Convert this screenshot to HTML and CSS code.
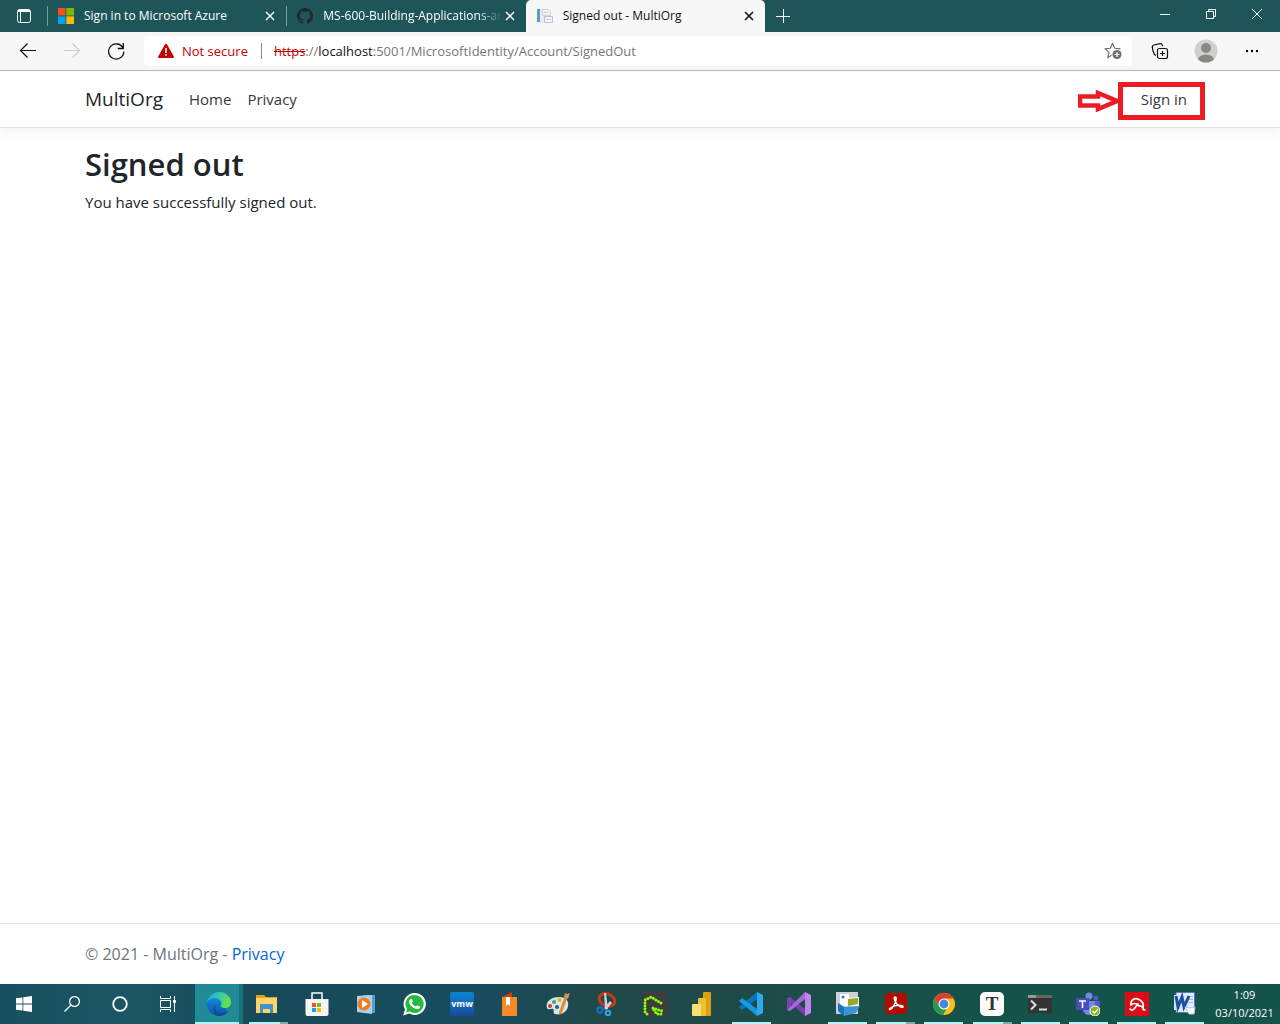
FILE: index.html
```html
<!DOCTYPE html>
<html lang="en">
<head>
<meta charset="utf-8">
<meta name="viewport" content="width=device-width, initial-scale=1">
<title>Signed out - MultiOrg</title>
<link rel="stylesheet" href="styles.css">
</head>
<body>
<div class="titlebar">
  <button class="tab-actions" aria-label="Tab actions menu">
    <svg width="16" height="16" viewBox="0 0 16 16" fill="none" stroke="#fff"><rect x="1.500" y="1.500" width="13" height="13" rx="2"/><path d="M2 3.500h12M2 2.500h12M4.500 4v10"/></svg>
  </button>
  <div class="tabs">
    <div class="tab">
      <button class="tab-main">
        <svg width="16" height="16" viewBox="0 0 16 16"><path fill="#f25022" d="M0 0h7.500v7.500H0z"/><path fill="#7fba00" d="M8.300 0H16v7.500H8.300z"/><path fill="#00a4ef" d="M0 8.300h7.500V16H0z"/><path fill="#ffb900" d="M8.300 8.300H16V16H8.300z"/></svg>
        <span class="tab-title">Sign in to Microsoft Azure</span>
      </button>
      <button class="tab-close" aria-label="Close tab"><svg width="10" height="10" viewBox="0 0 10 10" stroke="currentColor" stroke-width="1.300"><path d="M1 1l8 8M9 1L1 9"/></svg></button>
    </div>
    <div class="tab">
      <button class="tab-main">
        <svg width="16" height="16" viewBox="0 0 16 16" fill="#24292e"><path d="M8 0C3.580 0 0 3.580 0 8c0 3.540 2.290 6.530 5.470 7.590.4.070.55-.17.55-.38 0-.19-.01-.82-.01-1.490-2.010.37-2.530-.49-2.690-.94-.09-.23-.48-.94-.82-1.130-.28-.15-.68-.52-.01-.53.63-.01 1.080.58 1.230.82.72 1.210 1.870.87 2.330.66.07-.52.28-.87.51-1.070-1.780-.2-3.640-.89-3.640-3.950 0-.87.31-1.590.82-2.150-.08-.2-.36-1.020.08-2.120 0 0 .67-.21 2.200.82.64-.18 1.320-.27 2-.27s1.360.09 2 .27c1.530-1.040 2.200-.82 2.200-.82.44 1.100.16 1.920.08 2.120.51.56.82 1.270.82 2.150 0 3.070-1.870 3.750-3.650 3.950.29.25.54.73.54 1.480 0 1.070-.01 1.930-.01 2.200 0 .21.15.46.55.38A8.010 8.010 0 0 0 16 8c0-4.420-3.580-8-8-8z"/></svg>
        <span class="tab-title tab-title-fade">MS-600-Building-Applications-ar</span>
      </button>
      <button class="tab-close" aria-label="Close tab"><svg width="10" height="10" viewBox="0 0 10 10" stroke="currentColor" stroke-width="1.300"><path d="M1 1l8 8M9 1L1 9"/></svg></button>
    </div>
    <div class="tab tab-active">
      <button class="tab-main">
        <svg width="16" height="16" viewBox="0 0 16 16"><path fill="#e8edf3" d="M1 1h10v14H1z"/><path fill="#5b9bd0" d="M0 1h3v13H0z"/><path fill="#f1f3f7" stroke="#ccd2dc" d="M5.500 1.500h6l2 2v4h-8z"/><path fill="#f4f5f9" stroke="#bcc2d0" d="M7.500 8.500h8v6h-8z"/><path stroke="#c3cad6" d="M9 11.500h5M7 4.500h4"/></svg>
        <span class="tab-title">Signed out - MultiOrg</span>
      </button>
      <button class="tab-close" aria-label="Close tab"><svg width="10" height="10" viewBox="0 0 10 10" stroke="currentColor" stroke-width="1.600"><path d="M1 1l8 8M9 1L1 9"/></svg></button>
    </div>
  </div>
  <button class="new-tab" aria-label="New tab"><svg width="14" height="14" viewBox="0 0 14 14" stroke="#fff"><path d="M0 7.500h14M7.500 0v14"/></svg></button>
  <div class="window-controls">
    <button aria-label="Minimise"><svg width="10" height="10" viewBox="0 0 10 10" stroke="#fff"><path d="M0 5.500h10"/></svg></button>
    <button aria-label="Restore"><svg width="10" height="10" viewBox="0 0 10 10" fill="none" stroke="#fff"><path d="M.5 2.500h7v7h-7zM2.500 2V.5h7v7H8"/></svg></button>
    <button aria-label="Close window"><svg width="10" height="10" viewBox="0 0 10 10" stroke="#fff"><path d="M0 0l10 10M10 0L0 10"/></svg></button>
  </div>
</div>

<div class="toolbar">
  <div class="nav-buttons">
    <button aria-label="Back"><svg width="18" height="18" viewBox="0 0 18 18" fill="none" stroke="#111" stroke-width="1.200"><path d="M17 8.500H1.500M8.500 1.500l-7 7 7 7"/></svg></button>
    <button aria-label="Forward" disabled><svg width="18" height="18" viewBox="0 0 18 18" fill="none" stroke="#ccc" stroke-width="1.200"><path d="M1 8.500h15.500M9.500 1.500l7 7-7 7"/></svg></button>
    <button aria-label="Refresh"><svg width="18" height="18" viewBox="0 0 18 18" fill="none" stroke="#111" stroke-width="1.300"><path d="M16.200 6.500A7.600 7.600 0 1 0 16.800 9.500M16.300 1v5.500h-5.500"/></svg></button>
  </div>
  <div class="address">
    <svg width="16" height="16" viewBox="0 0 16 16"><path fill="#c50000" d="M8 .8c.5 0 .8.200 1.100.7l6.600 11.800c.5.900 0 1.700-1 1.700H1.300c-1 0-1.500-.8-1-1.700L6.900 1.500C7.200 1 7.500.8 8 .8z"/><path stroke="#fff" stroke-width="1.600" d="M8 5v5M8 11.200v1.600"/></svg>
    <span class="not-secure">Not secure</span>
    <span class="address-rule"></span>
    <label class="url-origin" for="url"><s>https</s><span class="url-dim">://</span>localhost</label>
    <input class="url-path" id="url" type="text" value=":5001/MicrosoftIdentity/Account/SignedOut" spellcheck="false">
    <button aria-label="Add to favourites"><svg width="18" height="18" viewBox="0 0 18 18"><path fill="none" stroke="#666" stroke-width="1.100" stroke-linejoin="round" d="M8.500 1.200l2.200 5 5.300.5-4 3.600 1.200 5.300-4.700-2.800-4.700 2.800L5 10.300 1 6.700l5.300-.5z"/><circle cx="13" cy="12.500" r="5.500" fill="#fff"/><circle cx="13" cy="12.500" r="4.500" fill="#6e6e6e"/><path stroke="#fff" stroke-width="1.200" d="M10.500 12.500h5M13 10v5"/></svg></button>
  </div>
  <div class="tool-buttons">
    <button aria-label="Collections"><svg width="18" height="18" viewBox="0 0 18 18" fill="none" stroke="#111" stroke-width="1.200"><rect x="6.500" y="6.500" width="10" height="10" rx="2"/><path d="M11.500 9v5M9 11.500h5M5 13.500C3.300 12.800 2.700 11.500 2.200 9.500L1.300 5.500C1 4 1.800 3.300 3 3l6-1.300c1.200-.2 2 .4 2.300 1.500l.2.800"/></svg></button>
    <button aria-label="Profile"><svg width="24" height="24" viewBox="0 0 24 24"><defs><clipPath id="disc"><circle cx="12" cy="12" r="11.500"/></clipPath></defs><g clip-path="url(#disc)"><path fill="#d2d0ce" d="M0 0h24v24H0z"/><circle cx="12" cy="9" r="5" fill="#8a8886"/><ellipse cx="12" cy="21" rx="8" ry="5.500" fill="#8a8886"/></g></svg></button>
    <button aria-label="Settings and more"><svg width="14" height="4" viewBox="0 0 14 4"><circle cx="2" cy="2" r="1.200"/><circle cx="7" cy="2" r="1.200"/><circle cx="12" cy="2" r="1.200"/></svg></button>
  </div>
</div>

<header class="site-header">
  <nav class="container site-nav">
    <a class="brand" href="#">MultiOrg</a>
    <a class="nav-link" href="#">Home</a>
    <a class="nav-link" href="#">Privacy</a>
    <a class="nav-link sign-in" href="#">Sign in
      <svg class="callout-arrow" width="42" height="22" viewBox="0 0 42 22"><path fill="#fff" stroke="#ed1c24" stroke-width="4.500" d="M2 6.500h18V3l19 8-19 8v-3.500H2z"/></svg>
      <span class="callout-box"></span>
    </a>
  </nav>
</header>

<main class="container site-main">
  <h1>Signed out</h1>
  <p>You have successfully signed out.</p>
</main>

<footer class="site-footer">
  <div class="container">© 2021 - MultiOrg - <a href="#">Privacy</a></div>
</footer>

<div class="taskbar">
  <div class="system">
    <button aria-label="Start"><svg width="16" height="16" viewBox="0 0 16 16" fill="#fff"><path d="M0 2.300l6.500-.9v6.200H0zM7.300 1.300L16 0v7.600H7.300zM0 8.400h6.500v6.200L0 13.700zM7.300 8.400H16V16l-8.700-1.200z"/></svg></button>
    <button aria-label="Search"><svg width="16" height="16" viewBox="0 0 16 16" fill="none" stroke="#fff" stroke-width="1.300"><circle cx="10.500" cy="5.500" r="4.900"/><path d="M7 9L.5 15.500"/></svg></button>
    <button aria-label="Cortana"><svg width="16" height="16" viewBox="0 0 16 16" fill="none" stroke="#fff" stroke-width="1.800"><circle cx="8" cy="8" r="6.800"/></svg></button>
    <button aria-label="Task view"><svg width="16" height="16" viewBox="0 0 16 16" fill="none" stroke="#fff"><path d="M.5 0v2.500h10V0M.5 16v-2.500h10V16M.5 4.500h10v7H.5zM14.500 0v16"/><path fill="#fff" d="M13.500 4.500h2v2h-2z"/></svg></button>
  </div>
  <div class="apps">
    <button class="app app-active" aria-label="Microsoft Edge"><svg width="24" height="24" viewBox="0 0 24 24"><defs><linearGradient id="edge-top" x2="1" y2=".3"><stop stop-color="#1ba5e0"/><stop offset=".5" stop-color="#30c8b8"/><stop offset="1" stop-color="#67e04c"/></linearGradient><linearGradient id="edge-low" x2="0" y2="1"><stop stop-color="#198fd9"/><stop offset="1" stop-color="#0c4fae"/></linearGradient></defs><path fill="url(#edge-low)" d="M0 12C0 6 4 3 9 5c4 1 6 4 6 7l5 7c-2 3-5 5-8 5C5 24 0 19 0 12z"/><path fill="#114a99" d="M9 12c-3 5 1 9 6 9 3 0 5-1 7-3-2 4-6 6-10 6-6-1-7-9-3-12z"/><path fill="url(#edge-top)" d="M0 11C1 4 6 0 12 0c7 0 12 5 12 10 0 4-3 6-6 6-3 0-5-1-4-3 2-3-2-7-6-7-4 0-7 2-8 5z"/></svg></button>
    <button class="app app-open app-stack" aria-label="File Explorer"><svg width="24" height="24" viewBox="0 0 24 24"><path fill="#e3a21a" d="M1 3h8l2 2h11v3H1z"/><path fill="#ffd466" d="M1 6h21v15H1z"/><path fill="#3f91d2" d="M5 13q0-1 1-1h11q1 0 1 1v8h-3v-4H8v4H5z"/></svg></button>
    <button class="app" aria-label="Microsoft Store"><svg width="24" height="24" viewBox="0 0 24 24"><path fill="none" stroke="#fff" stroke-width="1.500" d="M7 8V1h10v7"/><path fill="#f5f5f5" d="M.5 7h23v15q0 2-2 2h-19q-2 0-2-2z"/><path fill="#f25022" d="M7 11h4v4H7z"/><path fill="#7fba00" d="M12 11h4v4h-4z"/><path fill="#00a4ef" d="M7 16h4v4H7z"/><path fill="#ffb900" d="M12 16h4v4h-4z"/></svg></button>
    <button class="app" aria-label="Media Player"><svg width="24" height="24" viewBox="0 0 24 24"><path fill="#5a9dc9" d="M9 3h12v18H9z"/><path fill="#a9d2e9" d="M3 4l15-1v19L3 20z"/><circle cx="10" cy="12" r="6.500" fill="#f27a21"/><path fill="#fff" d="M8 8l6 4-6 4z"/></svg></button>
    <button class="app" aria-label="WhatsApp"><svg width="24" height="24" viewBox="0 0 24 24"><path fill="#fff" d="M12.500 1a11 11 0 1 1-5 20.600L1 23.500l2-6A11 11 0 0 1 12.500 1z"/><path fill="#29b93f" d="M12.500 3a9 9 0 1 1-4.800 16.500L4 20.500l1-3.500A9 9 0 0 1 12.500 3z"/><path fill="#fff" d="M9 7c.8-.3 1 .1 1.800 2.300-.1.800-.6 1-1 1.600 1 2 2.300 3 4.300 3.700l1.300-1.400 2.900 1.500c-.2 2.200-2.200 2.700-4 2.200-4-1-6.500-4-7.200-6.500C6.800 8.800 8 7.300 9 7z"/></svg></button>
    <button class="app" aria-label="VMware"><span class="tile tile-vmw">vmw</span></button>
    <button class="app" aria-label="Reader"><svg width="24" height="24" viewBox="0 0 24 24"><path fill="#d83b01" d="M4 5l10-5v5z"/><path fill="#f68a28" d="M4 5h15v19H4z"/><path fill="#fff" d="M8 5h4v9l-2-2-2 2z"/></svg></button>
    <button class="app" aria-label="Paint"><svg width="24" height="24" viewBox="0 0 24 24"><path fill="#cfe6f3" d="M1 16C-1 9 6 5 13 5s10 4 9 9c0 5-7 10-13 8-3-1 0-4-2-5s-4 2-6-1z"/><circle cx="8" cy="10" r="2" fill="#4aa83d"/><circle cx="13.500" cy="8" r="2" fill="#f0b11e"/><circle cx="4" cy="14" r="2" fill="#d93a35"/><circle cx="11" cy="15" r="2" fill="#2d5c80"/><path stroke="#e58a25" stroke-width="3" d="M14 22l6-17"/><path fill="#c99461" d="M18 5l1-4 2 1 3-1-2 6z"/></svg></button>
    <button class="app" aria-label="Snipping Tool"><svg width="24" height="24" viewBox="0 0 24 24" fill="none"><ellipse cx="12" cy="8" rx="8" ry="6" transform="rotate(25 12 8)" stroke="#c83a17" stroke-width="3"/><path fill="#cdd3d8" d="M9 1l2 0 2 16h-3zM15 9l2 2-6 7-2-2z"/><circle cx="5" cy="18" r="2.700" stroke="#1473c5" stroke-width="2"/><circle cx="13" cy="21" r="2.300" stroke="#2ba3e8" stroke-width="2"/></svg></button>
    <button class="app" aria-label="Greenshot"><svg width="24" height="24" viewBox="0 0 24 24"><path fill="#3d3d3d" d="M0 0h24v24H0z"/><path fill="none" stroke="#8aff00" stroke-width="3" stroke-linecap="round" stroke-dasharray="0 3" d="M18 11L8 5 2 8v14M4 22h1M10 16l9 3M11 18l3 4h5"/></svg></button>
    <button class="app" aria-label="Power BI"><svg width="24" height="24" viewBox="0 0 24 24"><rect x="12" width="8" height="24" rx="1" fill="#dba011"/><rect x="7" y="6" width="8" height="18" rx="1" fill="#eec02f"/><rect x="1" y="12" width="9" height="12" rx="1" fill="#f8df74"/></svg></button>
    <button class="app app-open" aria-label="Visual Studio Code"><svg width="24" height="24" viewBox="0 0 24 24"><path fill="#0877b9" d="M18 0v7L3 18l-3-3z"/><path fill="#149be0" d="M0 9l3-3 15 11v7z"/><path fill="#2cabf2" d="M18 0l6 3v18l-6 3z"/></svg></button>
    <button class="app" aria-label="Visual Studio"><svg width="24" height="24" viewBox="0 0 24 24"><path fill="#7b3fb0" d="M0 6l3-1 15 12v7L4 11v4l-1 4-3-1z"/><path fill="#a468db" d="M18 0v7L3 19l-3-1 4-4z"/><path fill="#bd84f0" d="M18 0l6 3v18l-6 3z"/></svg></button>
    <button class="app app-open" aria-label="Photo Gallery"><svg width="24" height="24" viewBox="0 0 24 24"><path fill="#cad0d5" d="M0 0h22v22H0z"/><path fill="#fff" d="M4 2h9v12H4z"/><circle cx="7" cy="5" r="1.500" fill="#3178c6"/><path fill="#f7f7e8" d="M11 6l12-1v9H11z"/><path fill="#97a928" d="M12 7l10-1v6l-10 2z"/><path fill="#3d94dd" d="M2 11l6 4 16-1-4 7-12 3-6-5z"/><path fill="#1875c4" d="M2 11l6 4v9l-6-5z"/></svg></button>
    <button class="app app-open app-stack-wide" aria-label="Adobe Acrobat"><svg width="24" height="24" viewBox="0 0 24 24"><rect x="1" y="1" width="22" height="21" rx="4" fill="#b30b00"/><path fill="none" stroke="#fff" stroke-width="1.500" d="M11 5c2 0 1 3 .5 5C10 14 7 18 5.500 17.500c-1-1 4-3.500 7-4s7-.2 6.500 1.500c-1 1.500-6-2-7.500-5S10 5 11 5z"/></svg></button>
    <button class="app app-open" aria-label="Google Chrome"><svg width="24" height="24" viewBox="0 0 24 24"><circle cx="12" cy="12" r="11" fill="#fbc116"/><path fill="#e33b2e" d="M2.500 6.500A11 11 0 0 1 21.500 6.500H12l-4.800 8z"/><path fill="#28994c" d="M2.500 6.500A11 11 0 0 0 11 23l5.500-9L12 17l-4.800-2.500z"/><circle cx="12" cy="12" r="5.500" fill="#fff"/><circle cx="12" cy="12" r="4.400" fill="#4285e8"/></svg></button>
    <button class="app app-open app-stack-wide" aria-label="Typora"><span class="tile tile-typora">T</span></button>
    <button class="app app-open" aria-label="Terminal"><svg width="24" height="24" viewBox="0 0 24 24"><path fill="#333" d="M0 3h24v18H0z"/><path fill="#999" d="M0 3h8v3H0z"/><path fill="#666" d="M8 3h16v3H8z"/><path fill="none" stroke="#ddd" stroke-width="2" d="M3 8.500l4.500 4.500L3 17.500M11 17.500h8"/></svg></button>
    <button class="app app-open" aria-label="Microsoft Teams"><svg width="24" height="24" viewBox="0 0 24 24"><circle cx="13" cy="4" r="3.500" fill="#7b83eb"/><circle cx="20" cy="6" r="2.500" fill="#5059c9"/><path fill="#5059c9" d="M16 9h8v7q-1 4-6 4z"/><path fill="#7b83eb" d="M7 9h12v8q-1 6-6 6t-6-5z"/><path fill="#464eb8" d="M0 6h13v12H0z"/><path stroke="#fff" stroke-width="1.600" d="M3 9h7M6.500 9v7"/><circle cx="19" cy="19" r="5" fill="#80b918" stroke="#fff"/><path fill="none" stroke="#fff" stroke-width="1.300" d="M16.500 19l2 2 3.500-4"/></svg></button>
    <button class="app app-open" aria-label="Avira"><svg width="24" height="24" viewBox="0 0 24 24"><path fill="#db0c15" d="M0 0h24v24H0z"/><path fill="none" stroke="#fff" stroke-width="1.700" stroke-linecap="round" d="M6 13C5 8 10 5 14 7.500c4 2 5 5 4 8.500-1-2-2.500-2.500-4-2-1.500-2-3-2.500-4.500-2.500-1.500 0-2.500.5-3.500 1.500zM13 12l-4 5q-2 2-4 0M18 16q0 2 2 2"/></svg></button>
    <button class="app app-open" aria-label="Word"><svg width="24" height="24" viewBox="0 0 24 24"><path fill="#e5eefb" stroke="#4b7dcc" d="M3 .5h18.500v20H3z"/><path stroke="#9bb9e6" d="M15 4.500h5M15 7.500h5M15 10.500h5"/><path fill="#d7e5fa" d="M1 3h15v15H1z"/><path fill="none" stroke="#1d4f9f" stroke-width="3" d="M3 4l2 11 4-10 2 10 5-11"/><path fill="#fff" stroke="#b7c6da" d="M12 15l5 1 5-1-1 7h-5z"/></svg></button>
  </div>
  <button class="clock"><span>1:09</span><span>03/10/2021</span></button>
</div>
</body>
</html>
```
FILE: styles.css
```css
*, *::before, *::after {
  box-sizing: border-box;
}

body {
  margin: 0;
  min-height: 100vh;
  display: flex;
  flex-direction: column;
  background: #fff;
  color: #212529;
  font-family: "Open Sans", "Noto Sans", sans-serif;
  font-size: 15px;
  line-height: 24px;
}

button {
  display: flex;
  align-items: center;
  justify-content: center;
  flex: none;
  margin: 0;
  padding: 0;
  border: 0;
  background: none;
  color: inherit;
  font: inherit;
}

svg {
  display: block;
  flex: none;
}

a {
  color: #0366d6;
  text-decoration: none;
}

/* Browser title bar */
.titlebar {
  display: flex;
  height: 32px;
  background: #1e5558;
  color: #fff;
  font-size: 12px;
}

.tab-actions {
  width: 47px;
}

.tabs {
  display: flex;
  flex: 0 1 718px;
  min-width: 0;
}

.tab {
  display: flex;
  align-items: center;
  flex: 1;
  min-width: 0;
  padding: 0 8px 0 11px;
  background: linear-gradient(#7b999b, #7b999b) left center / 1px 20px no-repeat;
}

.tab-main {
  flex: 1;
  min-width: 0;
  height: 32px;
  gap: 10px;
  justify-content: flex-start;
}

.tab-title {
  flex: 1;
  overflow: hidden;
  white-space: nowrap;
  text-align: left;
}

.tab-title-fade {
  mask-image: linear-gradient(to left, transparent, #000 24px);
}

.tab-close {
  width: 16px;
  height: 16px;
}

.tab-active {
  border-radius: 5px 5px 0 0;
  background: #f7f7f7;
  color: #111;
}

.new-tab {
  width: 36px;
}

.window-controls {
  display: flex;
  height: 28px;
  margin-left: auto;
}

.window-controls button {
  width: 46px;
}

/* Browser toolbar */
.toolbar {
  display: flex;
  align-items: center;
  height: 39px;
  border-bottom: 1px solid #bababa;
  background: #f7f7f7;
}

.nav-buttons,
.tool-buttons {
  display: flex;
  align-items: center;
}

.nav-buttons {
  padding: 0 6px;
}

.nav-buttons button {
  width: 44px;
}

.tool-buttons {
  padding: 0 5px;
}

.tool-buttons button {
  width: 46px;
}

.address {
  display: flex;
  align-items: center;
  flex: 1;
  min-width: 0;
  height: 30px;
  padding: 0 10px 0 14px;
  border-radius: 4px;
  background: #fff;
  font-size: 13px;
  color: #111;
}

.not-secure {
  margin-left: 8px;
  color: #c50000;
  white-space: nowrap;
}

.address-rule {
  width: 1px;
  height: 16px;
  margin: 0 12px 0 13px;
  background: #8a8a8a;
}

.url-origin s {
  color: #c50000;
}

.url-origin .url-dim {
  color: #767676;
}

.url-path {
  flex: 1;
  min-width: 0;
  padding: 0;
  border: 0;
  outline: 0;
  background: none;
  color: #767676;
  font: inherit;
}

/* Site */
.container {
  width: 100%;
  max-width: 1140px;
  margin: 0 auto;
  padding: 0 15px;
}

.site-header {
  border-bottom: 1px solid #dee2e6;
  box-shadow: 0 4px 12px rgba(0, 0, 0, 0.05);
}

.site-nav {
  display: flex;
  align-items: center;
  height: 56px;
}

.brand {
  margin-right: 18px;
  color: #212529;
  font-size: 19px;
}

.nav-link {
  padding: 8px;
  color: #343a40;
}

.sign-in {
  position: relative;
  margin-left: auto;
}

.callout-box {
  position: absolute;
  inset: 3px -10px -1px -15px;
  border: 5px solid #ed1c24;
}

.callout-arrow {
  position: absolute;
  top: 11px;
  right: calc(100% + 13px);
}

.site-main {
  flex: 1;
  padding-top: 16px;
}

h1 {
  margin: 0 0 6px;
  font-size: 31px;
  font-weight: 600;
  line-height: 40px;
}

p {
  margin: 0;
}

.site-footer {
  border-top: 1px solid #dee2e6;
  color: #6c757d;
  font-size: 16px;
  line-height: 60px;
}

/* Desktop taskbar */
.taskbar {
  display: flex;
  height: 40px;
  background: linear-gradient(90deg, #175060, #1b5663 10%, #164a5a 20%, #194c5d 38%, #20494a 46%, #1f4a47 58%, #15534a 75%, #14544a);
  color: #fff;
}

.system {
  display: flex;
  padding-right: 3px;
}

.system button {
  width: 48px;
}

.apps {
  display: flex;
  flex: 1;
  min-width: 0;
}

.app {
  flex: 1;
  min-width: 0;
  height: 40px;
}

.app-open {
  background: linear-gradient(#aef7f8, #aef7f8) center bottom / 39px 2px no-repeat;
}

.app-stack {
  padding-right: 2px;
  background-image: linear-gradient(90deg, #aef7f8 31px, #7faeb0 31px);
}

.app-stack-wide {
  background-image: linear-gradient(90deg, #aef7f8 30px, #7faeb0 30px);
}

.app-active {
  background:
    linear-gradient(#aef7f8, #aef7f8) left bottom / 44px 2px no-repeat,
    linear-gradient(90deg, #208b96 44px, #1c7078 44px);
}

.tile {
  display: flex;
  align-items: center;
  justify-content: center;
  width: 24px;
  height: 24px;
  border-radius: 2px;
}

.tile-vmw {
  background: linear-gradient(#0a86cf, #1a4a9c);
  font-size: 9px;
  font-weight: 700;
}

.tile-typora {
  border-radius: 5px;
  background: #fafafa;
  color: #333;
  font-family: "Liberation Serif", serif;
  font-size: 19px;
  font-weight: 700;
}

.clock {
  flex-direction: column;
  width: 71px;
  font-size: 11px;
  line-height: 18px;
}
```
